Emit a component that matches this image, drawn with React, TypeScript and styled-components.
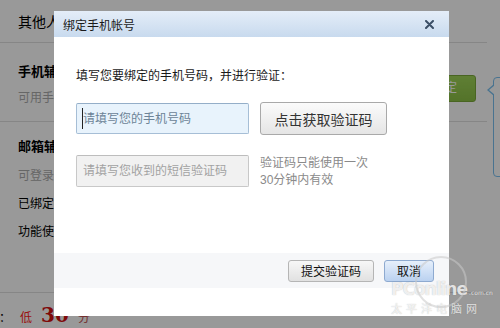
import React from "react";
import styled, { createGlobalStyle } from "styled-components";

const Global = createGlobalStyle`
  html, body { margin: 0; padding: 0; background: #fff; }
  body { width: 500px; height: 328px; overflow: hidden; }
  * { box-sizing: border-box; }
`;

const CJK = `"Liberation Sans", "Noto Sans CJK SC", sans-serif`;

const Page = styled.div`
  position: relative;
  width: 500px;
  height: 328px;
  overflow: hidden;
  background: #fff;
  font-family: ${CJK};
  color: #000;
`;

const Sections = styled.div`
  width: 487px;
  display: flex;
  flex-direction: column;
`;

const Section = styled.section<{ $h: number; $pt: number }>`
  height: ${(p) => p.$h}px;
  padding: ${(p) => p.$pt}px 11px 0 18px;
  border-bottom: 1px solid #e0e0e0;
  display: flex;
  align-items: flex-start;
  justify-content: space-between;
`;

const Col = styled.div`
  display: flex;
  flex-direction: column;
`;

const Lead = styled.div`
  font-size: 14px;
  line-height: 20px;
  color: #000;
`;

const Heading = styled.div<{ $lh?: number }>`
  font-size: 13px;
  font-weight: bold;
  line-height: ${(p) => p.$lh ?? 18}px;
  color: #000;
`;

const Line = styled.div<{ $muted?: boolean; $lh?: number; $mt?: number }>`
  font-size: 12px;
  line-height: ${(p) => p.$lh ?? 18}px;
  margin-top: ${(p) => p.$mt ?? 0}px;
  color: ${(p) => (p.$muted ? "#aaa" : "#000")};
`;

const GreenButton = styled.div`
  margin-top: 12px;
  height: 27px;
  padding: 0 18px;
  border-radius: 3px;
  border: 1px solid #7aa83a;
  background: linear-gradient(#9fd458, #8cc046);
  color: #fff;
  font-size: 12px;
  line-height: 25px;
`;

const ScoreRow = styled.div`
  display: flex;
  align-items: baseline;
  gap: 9px;
  margin: 12px 0 0 -1px;
  color: #ff1a1a;
  font-size: 12px;
  line-height: 20px;
`;

const ScoreColon = styled.span`
  color: #000;
`;

const ScoreNum = styled.span`
  font-family: "DejaVu Serif", "Liberation Serif", serif;
  font-size: 20px;
  font-weight: bold;
  color: #d41010;
`;

const ScoreUnit = styled.span`
  color: #c05050;
`;

const Bubble = styled.div`
  position: absolute;
  left: 493px;
  top: 77px;
  width: 40px;
  height: 100px;
  border: 1px solid #7ac0f0;
  border-radius: 4px;
  background: #fff;
  &::before {
    content: "";
    position: absolute;
    left: -7px;
    top: 6px;
    border-style: solid;
    border-width: 6px 7px 6px 0;
    border-color: transparent #7ac0f0 transparent transparent;
  }
  &::after {
    content: "";
    position: absolute;
    left: -5px;
    top: 7px;
    border-style: solid;
    border-width: 5px 6px 5px 0;
    border-color: transparent #fff transparent transparent;
  }
`;

const Overlay = styled.div`
  position: absolute;
  inset: 0;
  background: rgba(0, 0, 0, 0.4);
  z-index: 1;
`;

const Dialog = styled.div`
  position: absolute;
  left: 54px;
  top: 11px;
  width: 395px;
  height: 305px;
  padding-bottom: 28px;
  background: #fff;
  display: flex;
  flex-direction: column;
  z-index: 2;
`;

const TitleBar = styled.div`
  flex: none;
  height: 26px;
  padding: 0 15px 0 9px;
  display: flex;
  align-items: center;
  justify-content: space-between;
  background: linear-gradient(#e4edf8, #c8daee);
  font-size: 12px;
  color: #1a1a1a;
`;

const CloseBtn = styled.span`
  display: flex;
  width: 9px;
  height: 9px;
`;

const Body = styled.div`
  flex: 1;
  padding: 30px 22px 0;
  display: flex;
  flex-direction: column;
`;

const Prompt = styled.div`
  font-size: 12px;
  line-height: 18px;
  color: #1a1a1a;
`;

const FieldRow = styled.div<{ $mt: number; $align: string }>`
  margin-top: ${(p) => p.$mt}px;
  display: flex;
  align-items: ${(p) => p.$align};
  gap: 11px;
`;

const Field = styled.div<{ $h: number }>`
  position: relative;
  width: 173px;
  height: ${(p) => p.$h}px;
  flex: none;
`;

const Input = styled.input<{ $active?: boolean }>`
  width: 100%;
  height: 100%;
  margin: 0;
  padding: 0 0 0 6px;
  border: 1px solid ${(p) => (p.$active ? "#a6bed6" : "#c8c8c8")};
  border-top-color: ${(p) => (p.$active ? "#94aec8" : "#bdbdbd")};
  border-radius: 2px;
  background: ${(p) => (p.$active ? "#e8f3fc" : "#f1f1f1")};
  font-family: ${CJK};
  font-size: 12px;
  outline: none;
  &::placeholder {
    color: ${(p) => (p.$active ? "#6c8397" : "#a2a2a2")};
    opacity: 1;
  }
`;

const Caret = styled.span`
  position: absolute;
  left: 6px;
  top: 5px;
  width: 1px;
  height: 21px;
  background: #222;
`;

const GetCode = styled.button`
  width: 127px;
  height: 33px;
  padding: 0;
  border: 1px solid #a9a9a9;
  border-radius: 3px;
  background: linear-gradient(#fbfbfb, #e5e5e5);
  font-family: ${CJK};
  font-size: 14px;
  color: #333;
`;

const Hint = styled.div`
  font-size: 12px;
  line-height: 17px;
  color: #8a8a8a;
`;

const Footer = styled.div`
  flex: none;
  height: 35px;
  padding-right: 15px;
  display: flex;
  align-items: center;
  justify-content: flex-end;
  gap: 10px;
  background: #f6f7f9;
`;

const FootButton = styled.button<{ $primary?: boolean }>`
  height: 22px;
  padding: 0 12px;
  border: 1px solid ${(p) => (p.$primary ? "#8eaad0" : "#b5b5b5")};
  border-radius: 3px;
  background: ${(p) =>
    p.$primary
      ? "linear-gradient(#e6effb, #bad1f0)"
      : "linear-gradient(#f7f7f7, #e1e1e1)"};
  font-family: ${CJK};
  font-size: 12px;
  color: #111;
`;

const Watermark = styled.div`
  position: absolute;
  left: 391px;
  top: 280px;
  z-index: 3;
  display: flex;
  flex-direction: column;
  pointer-events: none;
  color: rgba(255, 255, 255, 0.78);
  text-shadow: 0 0 1px rgba(90, 90, 90, 0.45);
`;

const WmLogo = styled.div`
  display: flex;
  align-items: baseline;
  font-family: "DejaVu Sans", sans-serif;
  font-size: 17px;
  font-weight: bold;
  line-height: 18px;
  letter-spacing: -1px;
`;

const WmDomain = styled.span`
  font-size: 6px;
  font-weight: normal;
  letter-spacing: 0;
  margin-left: 2px;
`;

const WmName = styled.div`
  font-family: "Noto Sans CJK SC", sans-serif;
  font-size: 11px;
  line-height: 12px;
  letter-spacing: 4px;
`;

const WmRing = styled.svg`
  position: absolute;
  left: 22px;
  top: -26px;
`;

export default function App() {
  return (
    <>
      <Global />
      <Page>
        <Sections>
          <Section $h={43} $pt={12}>
            <Lead>其他人可以通过手机号码找到您</Lead>
          </Section>
          <Section $h={79} $pt={20}>
            <Col>
              <Heading>手机辅助登录</Heading>
              <Line $muted $mt={8}>可用手机号码登录</Line>
            </Col>
            <GreenButton>立即绑定</GreenButton>
          </Section>
          <Section $h={171} $pt={11}>
            <Col>
              <Heading $lh={28}>邮箱辅助登录</Heading>
              <Line $muted $lh={28} $mt={1}>可登录邮箱找回密码</Line>
              <Line $lh={28}>已绑定邮箱</Line>
              <Line $lh={28}>功能使用中</Line>
            </Col>
          </Section>
        </Sections>
        <ScoreRow>
          <ScoreColon>：</ScoreColon>
          <span>低</span>
          <ScoreNum>30</ScoreNum>
          <ScoreUnit>分</ScoreUnit>
        </ScoreRow>
        <Bubble />
        <Overlay />
        <Dialog>
          <TitleBar>
            <span>绑定手机帐号</span>
            <CloseBtn>
              <svg width="9" height="9" viewBox="0 0 9 9">
                <path d="M1 1L8 8M8 1L1 8" stroke="#3b4f66" strokeWidth="2" strokeLinecap="round" />
              </svg>
            </CloseBtn>
          </TitleBar>
          <Body>
            <Prompt>填写您要绑定的手机号码，并进行验证：</Prompt>
            <FieldRow $mt={17} $align="center">
              <Field $h={31}>
                <Input $active placeholder="请填写您的手机号码" />
                <Caret />
              </Field>
              <GetCode>点击获取验证码</GetCode>
            </FieldRow>
            <FieldRow $mt={20} $align="flex-start">
              <Field $h={32}>
                <Input placeholder="请填写您收到的短信验证码" />
              </Field>
              <Hint>
                验证码只能使用一次
                <br />
                30分钟内有效
              </Hint>
            </FieldRow>
          </Body>
          <Footer>
            <FootButton>提交验证码</FootButton>
            <FootButton $primary>取消</FootButton>
          </Footer>
        </Dialog>
        <Watermark>
          <WmRing width="56" height="56" viewBox="0 0 56 56">
            <circle cx="28" cy="28" r="25" fill="none" stroke="rgba(200,200,200,0.55)" strokeWidth="2" />
          </WmRing>
          <WmLogo>
            PConline<WmDomain>.com.cn</WmDomain>
          </WmLogo>
          <WmName>太平洋电脑网</WmName>
        </Watermark>
      </Page>
    </>
  );
}
